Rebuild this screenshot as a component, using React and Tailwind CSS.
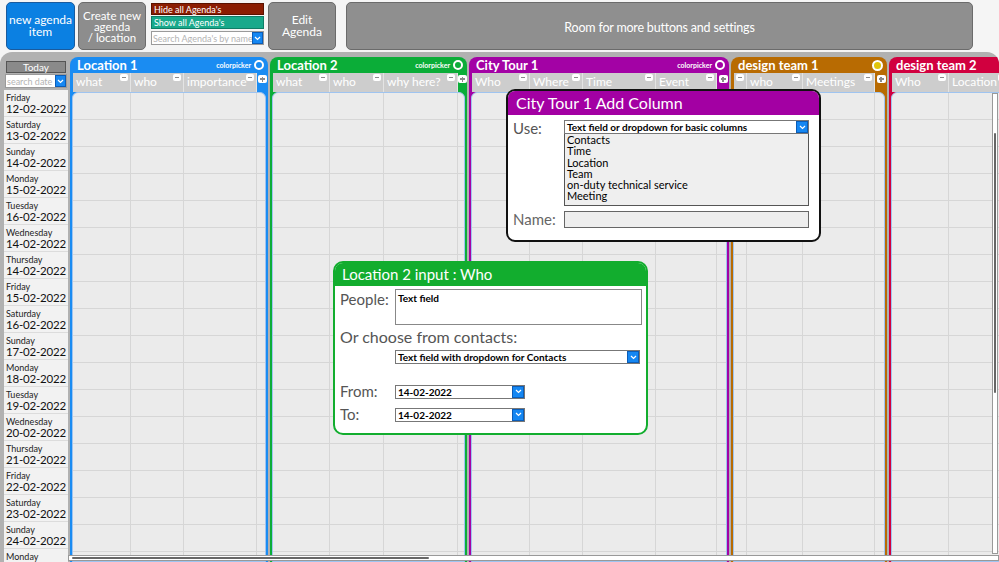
import React from 'react';

const dates = [
  ['Friday', '12-02-2022'], ['Saturday', '13-02-2022'], ['Sunday', '14-02-2022'],
  ['Monday', '15-02-2022'], ['Tuesday', '16-02-2022'], ['Wednesday', '14-02-2022'],
  ['Thursday', '14-02-2022'], ['Friday', '15-02-2022'], ['Saturday', '16-02-2022'],
  ['Sunday', '17-02-2022'], ['Monday', '18-02-2022'], ['Tuesday', '19-02-2022'],
  ['Wednesday', '20-02-2022'], ['Thursday', '21-02-2022'], ['Friday', '22-02-2022'],
  ['Saturday', '23-02-2022'], ['Sunday', '24-02-2022'], ['Monday', '25-02-2022'],
];

const rows = Array.from({ length: 18 }, (_, i) => i);

const Chevron = ({ size = 'w-[12px] h-[12px]' }) => (
  <span className={`${size} shrink-0 flex items-center justify-center bg-[#1587f2] border border-[#0b5db8]`}>
    <svg width="7" height="5" viewBox="0 0 7 5">
      <path d="M1 1l2.5 2.5L6 1" stroke="white" strokeWidth="1.2" fill="none" />
    </svg>
  </span>
);

const Minus = () => (
  <span className="absolute right-[2px] top-[1px] w-[8px] h-[7px] rounded-[2px] bg-white flex items-center justify-center">
    <span className="w-[4px] h-[1.5px] bg-[#8a8a8a]" />
  </span>
);

const Plus = () => (
  <span className="relative w-[9px] h-[8px] rounded-[2px] bg-white flex items-center justify-center">
    <span className="absolute w-[5px] h-[1.5px] bg-[#8a8a8a]" />
    <span className="absolute w-[1.5px] h-[5px] bg-[#8a8a8a]" />
  </span>
);

const Panel = ({ title, bg, w, cols, picker, dot }) => (
  <div className={`${w} ${bg} shrink-0 flex flex-col rounded-t-[8px] overflow-hidden`}>
    {/* title */}
    <div className="h-[16px] flex items-center justify-between pl-[7px] pr-[4px]">
      <span className="text-white font-bold text-[13px] leading-none whitespace-nowrap">{title}</span>
      {picker && (
        <div className="flex items-center gap-[3px]">
          <span className="text-[7px] font-bold text-white leading-none">colorpicker</span>
          <span className="w-[10px] h-[10px] rounded-full border-2 border-white" />
        </div>
      )}
      {dot && <span className="w-[11px] h-[11px] rounded-full border-2 border-white bg-[#e0c40c]" />}
    </div>

    {/* column headers */}
    <div className="h-[19px] flex pl-[3px]">
      {cols.map((c, i) => (
        <div
          key={i}
          className={`${c.w} shrink-0 relative bg-[#cdcdcd] border-r border-[#e4e4e4] text-white text-[12px] leading-none pl-[3px] pb-[1px] flex items-center whitespace-nowrap overflow-hidden`}
        >
          {c.label}
          <Minus />
        </div>
      ))}
      <div className="flex-1 flex justify-center pt-[2px]">
        <Plus />
      </div>
    </div>

    {/* body grid */}
    <div className="flex-1 mx-[2px] bg-[#ebebeb] border border-[#9fc4f0] rounded-t-[6px] overflow-hidden">
      {rows.map((r) => (
        <div key={r} className="h-[27px] flex border-b border-[#d6d6d6]">
          {cols.map((c, i) => (
            <div key={i} className={`${c.w} shrink-0 border-r border-[#d6d6d6]`} />
          ))}
          <div className="flex-1" />
        </div>
      ))}
    </div>
  </div>
);

const GrayBtn = ({ children, w, lead }) => (
  <div className={`${w} ${lead} h-[48px] shrink-0 rounded-[5px] bg-[#8d8d8d] border border-[#6b6b6b] text-white flex flex-col items-center justify-center text-center`}>
    {children}
  </div>
);

export default function App() {
  return (
    <div className="relative w-[999px] h-[562px] overflow-hidden bg-[#f5f5f5] font-['Lato',sans-serif]">
      {/* toolbar */}
      <div className="h-[52px] flex items-start pt-[2px] pl-[6px]">
        <div className="w-[69px] h-[48px] shrink-0 rounded-[5px] bg-[#0b80e2] border border-[#1a5b9e] text-white text-[12px] leading-[12px] flex flex-col items-center justify-center text-center">
          <span>new agenda</span>
          <span>item</span>
        </div>
        <div className="ml-[3px]">
          <GrayBtn w="w-[68px]" lead="text-[11.5px] leading-[11px]">
            <span>Create new</span>
            <span>agenda</span>
            <span>/ location</span>
          </GrayBtn>
        </div>
        <div className="ml-[5px] w-[113px] shrink-0 flex flex-col gap-[1px] pt-[1px]">
          <div className="h-[12px] bg-[#8b1d02] border border-[#5a1200] text-white text-[9px] leading-none pl-[2px] flex items-center">Hide all Agenda's</div>
          <div className="h-[13px] bg-[#18a98b] border border-[#0f7d66] text-white text-[9px] leading-none pl-[2px] flex items-center">Show all Agenda's</div>
          <div className="mt-[1px] h-[14px] bg-white border border-[#9a9a9a] flex items-center justify-between">
            <span className="text-[#b4b4b4] text-[9px] leading-none pl-[1px] whitespace-nowrap overflow-hidden">Search Agenda's by name</span>
            <Chevron size="w-[11px] h-[12px]" />
          </div>
        </div>
        <div className="ml-[4px]">
          <GrayBtn w="w-[68px]" lead="text-[12px] leading-[12px]">
            <span>Edit</span>
            <span>Agenda</span>
          </GrayBtn>
        </div>
        <div className="ml-[10px] w-[627px] h-[48px] shrink-0 rounded-[5px] bg-[#8f8f8f] border border-[#6b6b6b] text-white text-[12.5px] tracking-[-0.2px] pt-[4px] flex items-center justify-center">
          Room for more buttons and settings
        </div>
      </div>

      {/* main */}
      <div className="relative h-[510px] bg-[#b1b1b1] rounded-t-[12px] flex pl-[4px] pt-[5px] gap-[2px] overflow-hidden">
        {/* dates column */}
        <div className="w-[64px] shrink-0 flex flex-col">
          <div className="mt-[4px] mx-[2px] h-[14px] bg-[#8a8a8a] border border-[#555] text-white text-[10px] leading-none flex items-center justify-center">Today</div>
          <div className="mt-[1px] ml-[1px] w-[62px] h-[14px] bg-white border border-[#9a9a9a] flex items-center justify-between">
            <span className="text-[#b4b4b4] text-[9px] leading-none pl-[1px]">search date</span>
            <Chevron size="w-[11px] h-[12px]" />
          </div>
          <div className="mt-[2px] bg-[#f2f2f2]">
            {dates.map(([d, n], i) => (
              <div key={i} className="h-[27px] border-b border-[#dcdcdc] pl-[2px] pt-[3px] flex flex-col whitespace-nowrap overflow-hidden">
                <span className="text-[9px] leading-[10px] text-[#222]">{d}</span>
                <span className="text-[11.5px] leading-[12px] tracking-[-0.2px] text-[#111]">{n}</span>
              </div>
            ))}
          </div>
        </div>

        <Panel
          title="Location 1" bg="bg-[#1a8cf2]" w="w-[198px]" picker
          cols={[{ w: 'w-[58px]', label: 'what' }, { w: 'w-[53px]', label: 'who' }, { w: 'w-[73px]', label: 'importance' }]}
        />
        <Panel
          title="Location 2" bg="bg-[#0bad38]" w="w-[197px]" picker
          cols={[{ w: 'w-[57px]', label: 'what' }, { w: 'w-[54px]', label: 'who' }, { w: 'w-[74px]', label: 'why here?' }]}
        />
        <Panel
          title="City Tour 1" bg="bg-[#a302a5]" w="w-[260px]" picker
          cols={[{ w: 'w-[58px]', label: 'Who' }, { w: 'w-[53px]', label: 'Where' }, { w: 'w-[73px]', label: 'Time' }, { w: 'w-[61px]', label: 'Event' }]}
        />
        <Panel
          title="design team 1" bg="bg-[#b86b02]" w="w-[156px]" dot
          cols={[{ w: 'w-[13px]', label: '' }, { w: 'w-[56px]', label: 'who' }, { w: 'w-[72px]', label: 'Meetings' }]}
        />
        <Panel
          title="design team 2" bg="bg-[#d1003f]" w="w-[160px]"
          cols={[{ w: 'w-[57px]', label: 'Who' }, { w: 'w-[60px]', label: 'Location' }]}
        />

        {/* scrollbars */}
        <div className="absolute left-[68px] right-0 bottom-[1px] h-[6px] bg-white border border-[#999]">
          <div className="ml-[3px] mt-[1px] w-[357px] h-[2px] rounded-full bg-[#666]" />
        </div>
        <div className="absolute left-[992px] top-[41px] w-[6px] bottom-[8px] bg-white border border-[#999]">
          <div className="ml-[1px] mt-[39px] w-[2px] h-[260px] rounded-full bg-[#666]" />
        </div>
      </div>

      {/* City Tour 1 Add Column dialog */}
      <div className="absolute left-[506px] top-[89px] w-[315px] h-[153px] bg-white border-2 border-[#111] rounded-[9px] overflow-hidden flex flex-col">
        <div className="h-[24px] bg-[#a300a3] text-white text-[16px] leading-none pl-[8px] flex items-center">City Tour 1 Add Column</div>
        <div className="flex pl-[5px] pt-[5px]">
          <span className="w-[51px] text-[15px] text-[#555] leading-none pt-[1px]">Use:</span>
          <div className="w-[245px] flex flex-col">
            <div className="h-[14px] bg-white border border-[#777] flex items-center justify-between">
              <span className="text-[10px] font-bold text-black leading-none pl-[2px]">Text field or dropdown for basic columns</span>
              <Chevron size="w-[12px] h-[12px]" />
            </div>
            <div className="h-[72px] bg-[#efefef] border border-[#555] border-t-0 pl-[2px] text-[11px] leading-[11.3px] text-black">
              <div>Contacts</div>
              <div>Time</div>
              <div>Location</div>
              <div>Team</div>
              <div>on-duty technical service</div>
              <div>Meeting</div>
            </div>
          </div>
        </div>
        <div className="flex items-center pl-[5px] mt-[5px]">
          <span className="w-[51px] text-[15px] text-[#666] leading-none">Name:</span>
          <div className="w-[245px] h-[17px] bg-[#eeeeee] border border-[#666]" />
        </div>
      </div>

      {/* Location 2 input dialog */}
      <div className="absolute left-[333px] top-[261px] w-[315px] h-[174px] bg-white border-2 border-[#12ad2e] rounded-[10px] overflow-hidden flex flex-col">
        <div className="h-[23px] bg-[#12ad2e] text-white text-[15px] leading-none pl-[7px] flex items-center">Location 2 input : Who</div>
        <div className="flex pl-[5px] pt-[3px]">
          <span className="w-[55px] text-[15px] text-[#555] leading-none pt-[3px]">People:</span>
          <div className="w-[247px] h-[36px] border border-[#888] text-[10px] font-bold text-black leading-none pl-[2px] pt-[3px]">Text field</div>
        </div>
        <div className="pl-[5px] mt-[4px] text-[16px] text-[#555] leading-none">Or choose from contacts:</div>
        <div className="ml-[60px] mt-[5px] w-[245px] h-[14px] border border-[#777] flex items-center justify-between">
          <span className="text-[10px] font-bold text-black leading-none pl-[2px]">Text field with dropdown for Contacts</span>
          <Chevron size="w-[12px] h-[12px]" />
        </div>
        <div className="flex items-center pl-[5px] mt-[20px]">
          <span className="w-[55px] text-[15px] text-[#555] leading-none">From:</span>
          <div className="w-[130px] h-[14px] border border-[#777] flex items-center justify-between">
            <span className="text-[10px] font-bold text-black leading-none pl-[2px]">14-02-2022</span>
            <Chevron size="w-[12px] h-[12px]" />
          </div>
        </div>
        <div className="flex items-center pl-[5px] mt-[8px]">
          <span className="w-[55px] text-[15px] text-[#555] leading-none">To:</span>
          <div className="w-[130px] h-[14px] border border-[#777] flex items-center justify-between">
            <span className="text-[10px] font-bold text-black leading-none pl-[2px]">14-02-2022</span>
            <Chevron size="w-[12px] h-[12px]" />
          </div>
        </div>
      </div>
    </div>
  );
}
